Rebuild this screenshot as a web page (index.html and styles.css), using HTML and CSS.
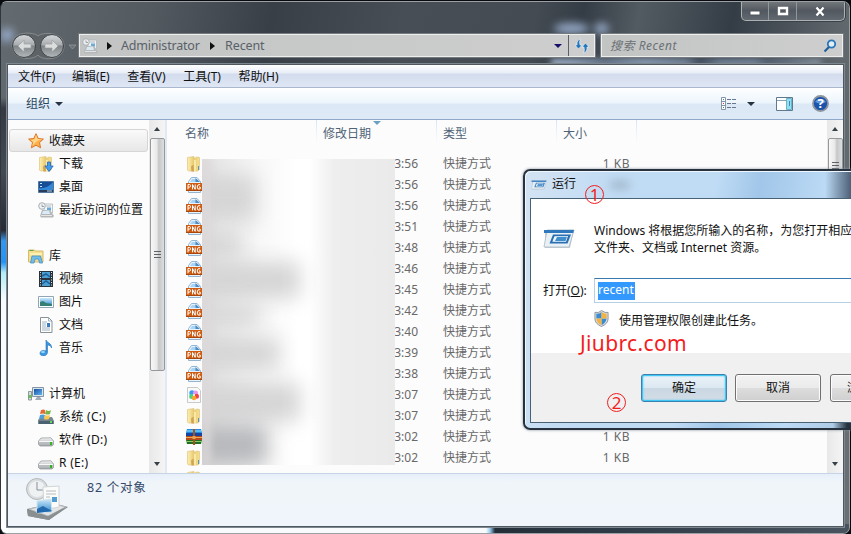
FILE: index.html
```html
<!DOCTYPE html>
<html lang="zh-CN">
<head>
<meta charset="utf-8">
<title>Recent</title>
<link rel="stylesheet" href="styles.css">
</head>
<body>
<svg class="defs" width="0" height="0" aria-hidden="true">
  <defs>
    <linearGradient id="gold" x1="0" x2="1"><stop offset="0" stop-color="#fff0b0"/><stop offset=".5" stop-color="#e8cb76"/><stop offset="1" stop-color="#f6df8c"/></linearGradient>
    <linearGradient id="blue" x1="0" y1="0" x2="1" y2="1"><stop offset="0" stop-color="#174da0"/><stop offset="1" stop-color="#62b4ee"/></linearGradient>
    <linearGradient id="sky" x1="0" y1="0" x2="0" y2="1"><stop offset="0" stop-color="#cdeafc"/><stop offset="1" stop-color="#2c86c8"/></linearGradient>
    <linearGradient id="orb" x1="0" y1="0" x2="0" y2="1"><stop offset="0" stop-color="#d4d8da"/><stop offset=".45" stop-color="#a9adb0"/><stop offset=".5" stop-color="#7e8386"/><stop offset="1" stop-color="#b4b9bb"/></linearGradient>
    <linearGradient id="steel" x1="0" y1="0" x2="0" y2="1"><stop offset="0" stop-color="#f4f4f4"/><stop offset="1" stop-color="#9b9fa2"/></linearGradient>
    <symbol id="folder" viewBox="0 0 16 16"><path d="M1.500 1.500 8 .5v2l3-1.500 2.500.5v12L12 15H2.500l-1-1z" fill="url(#gold)" stroke="#dfc67c" stroke-width=".7"/><path d="M5 10.500 7.500 8.500 8 15.500H5.500z" fill="#d0a458"/><path d="M8 4v11.500l2-1V4z" fill="#fae9a5"/><path d="M12 10h1v4h-1z" fill="#4d96dc"/></symbol>
    <symbol id="png" viewBox="0 0 16 16"><path d="M2.500 4.500 5.500.5H11l3.500 4V15.500h-12z" fill="#e8f4fd" stroke="#94b5d1"/><path d="M6 2h4v3H4z" fill="#a9d3f5"/><path d="M9.500 1v4H14z" fill="#4f8cc2"/><path d="M0 6h16v7.500H0z" fill="#ce5c12"/><path d="M0 13h16v1H0z" fill="#a9460a"/><path d="M2 12.300V7.500h1.500q1 0 1 1.300t-1 1.300H2M6.500 12.300V7.500l2.700 4.800V7.500M14.200 7.600q-3-.6-3 2.400t3 2V10h-1.200" fill="none" stroke="#fff" stroke-width="1" stroke-linejoin="bevel"/></symbol>
    <symbol id="colors" viewBox="0 0 16 16"><path d="M1.500.5h10l3 3v12h-13z" fill="#fafafa" stroke="#c9c9c9"/><circle cx="6" cy="6" r="2.700" fill="#3b9cf4"/><circle cx="9.500" cy="6" r="2.500" fill="#e59bef"/><circle cx="5.700" cy="9.500" r="2.500" fill="#4bd479"/><circle cx="10.500" cy="9.200" r="2.500" fill="#f04545"/><circle cx="8" cy="11" r="2.300" fill="#f4a731"/><circle cx="8" cy="8" r="1" fill="#fff"/></symbol>
    <symbol id="archive" viewBox="0 0 16 16"><path d="M1 0h14l1 4H0z" fill="#248be1"/><path d="M1 1h14v2H1z" fill="#58bdf7"/><path d="M0 4h16v3H0z" fill="#1645a1"/><path d="M0 7h16v4H0z" fill="#b74a1b"/><path d="M0 8h16v1H0z" fill="#efa657"/><path d="M0 11h16l-1 4H1z" fill="#1f6e25"/><path d="M0 12h16v1H0z" fill="#90ca61"/><path d="M7 0h2v16H7z" fill="#a65117"/><path d="M6.500 7h3v3h-3z" fill="#e5a34f"/></symbol>
    <symbol id="star" viewBox="0 0 16 16"><path d="m8 .7 2.200 4.800 5.200.6-3.900 3.500 1.100 5.200L8 12.200l-4.600 2.600 1.100-5.200L.6 6.100l5.200-.6z" fill="#fcb04a" stroke="#df7528"/><path d="m8 2 1.500 4H14L9 8 4 13l1.500-4L3 7l3.500-.5z" fill="#fed68c"/></symbol>
    <symbol id="download" viewBox="0 0 16 16"><use href="#folder" width="16" height="16"/><path d="M9.500 6h3v4h2.700L11 15.500 7 10h2.500z" fill="#429ded" stroke="#2367bb" stroke-width=".8"/></symbol>
    <symbol id="desktop" viewBox="0 0 16 16"><path d="M.5 2.500h15v11H.5z" fill="#174d97" stroke="#53779f"/><path d="M1 9c4 1 10-1 14-6v8H1z" fill="#3487d4"/><path d="M1 11h14v2H1z" fill="#283c59"/><path d="M2 4h2v1H2m0 2h2v1H2" fill="#bfe7ff"/><path d="M9 12h5" stroke="#b6d7ef"/></symbol>
    <symbol id="recent" viewBox="0 0 16 16"><path d="M6 2h8.500v9H6z" fill="#f5f6f7" stroke="#adb4b9" stroke-width=".8"/><path d="M8 4h5m-5 5h5" stroke="#b4bcc1"/><path d="M9 5.500h4v3H9z" fill="#65aada"/><circle cx="4" cy="4" r="3.300" fill="#f2f3f3" stroke="#a6aeb3"/><path d="M4 2.500v2h2" fill="none" stroke="#7c8a93" stroke-width=".8"/><path d="M4 8h8l4 6-1 1.500H3L2 14z" fill="#b4b8ba"/><path d="m5 9 6-.5 1 3.500H4z" fill="#dcecf6"/><path d="M3 13h11v1H3z" fill="#e4e6e7"/></symbol>
    <symbol id="library" viewBox="0 0 16 16"><path d="M.5 2h6l1 1H15v11H.5z" fill="#f5df8e" stroke="#d8bb68"/><path d="M2 5h12v2H2z" fill="#fff0b6"/><path d="M1.500 2.500h4" stroke="#58a85a"/><path d="m2.500 15 1.500-7h8.500l2 7h-3l-1-4H7l-1 4z" fill="#71bce9" stroke="#438fc7" stroke-width=".8"/></symbol>
    <symbol id="video" viewBox="0 0 16 16"><path d="M1 0h14v16H1z" fill="#28333b"/><path d="M4 1h8v6H4zm0 8h8v6H4z" fill="#4c9ed3"/><path d="m4 5 4-2 4 3M4 13l4-3 4 3" stroke="#1c5e94" stroke-width="1.500" fill="none"/><path d="M2.500 1v15M13.500 1v15" stroke="#dfe4e7" stroke-dasharray="1 1.500"/></symbol>
    <symbol id="picture" viewBox="0 0 16 16"><path d="M.5 2.500h15v11H.5z" fill="#fff" stroke="#90a5b5"/><path d="M2 4h12v8H2z" fill="url(#sky)"/><path d="m2 8 3-1 3 2 6 1v2H2z" fill="#347e73"/></symbol>
    <symbol id="document" viewBox="0 0 16 16"><path d="M2.500.5h8L14 4v11.500H2.500z" fill="#fff" stroke="#879397"/><path d="M10.500.5V4H14M4 5h5M4 7h4m-4 2h4m-4 2h8m-8 2h8" fill="none" stroke="#899fb0" stroke-width=".8"/><path d="M9 6h3v4H9z" fill="#367dc0"/></symbol>
    <symbol id="music" viewBox="0 0 16 16"><path d="M8 12V0c1 3 6 3 5.500 8-.5-2-2-3-4-3v7c0 5-8 5-7.500 1 .5-3 4-3 6-2" fill="#3d98e0" stroke="#2470b5" stroke-width=".6"/><ellipse cx="5" cy="12" rx="2" ry="1" fill="#9edaff"/></symbol>
    <symbol id="computer" viewBox="0 0 16 16"><path d="M.5 5.500h3V14h-3z" fill="#d3dadc" stroke="#8b999b"/><path d="M4.500 1.500h11v9h-11z" fill="#d8e5ed" stroke="#8695a3"/><path d="M6 3h8v6H6z" fill="url(#blue)"/><path d="m9 11-2 3h7l-2-3z" fill="#a0abb3"/><path d="M1 9h2v3H1z" fill="#5ccc3d"/></symbol>
    <symbol id="drive" viewBox="0 0 16 16"><path d="m3 6 10-.2L15.500 9v3.500L14 14H2L.5 12.500V9z" fill="url(#steel)" stroke="#999fa2" stroke-width=".8"/><path d="M1 9.500h14v3H1z" fill="#b9bdbf"/><path d="M1 9.500h14" stroke="#f8f8f8"/><path d="M12 10h2v3h-2z" fill="#31b820"/></symbol>
    <symbol id="system" viewBox="0 0 16 16"><path d="m2 9 12-1 2 4v3H0v-4z" fill="#75858e"/><path d="M1 12h14v3H1z" fill="#496171"/><path d="M12 12h2v2h-2z" fill="#5be050"/><path d="M3 1q3-1 4 0v4q-2-1-5 0z" fill="#e66a31"/><path d="M8 1q3 2 5 0l-1 4q-2 1-5 0z" fill="#76b646"/><path d="M2 6q3-1 5 0L6 10q-3-1-5 0z" fill="#4e9ed8"/><path d="M7 6q3 1 5 0l-1 4q-3 1-5 0z" fill="#ffc548"/></symbol>
    <symbol id="run" viewBox="0 0 32 20"><path d="m2 1 29-.2L27 19H2z" fill="#c6d0d7"/><path d="M4 1h27l-5 17H1z" fill="#e9f1f5" stroke="#a9b8c3" stroke-width=".8"/><path d="M1 1h30l-.8 3H1z" fill="#2e78bb"/><path d="m10 5.500 18-.1-3.500 9.100H6.500z" fill="#2b6fb3"/><path d="m11.500 7.200 13.500-.1-2 5.700H9.300z" fill="#eef8fe"/><path d="m14 8 10-.2-1.500 4.200H12z" fill="#3f8ecb"/></symbol>
    <symbol id="shield" viewBox="0 0 16 18"><path d="M8 .5q4 3 7 2v7q0 5-7 8-7-3-7-8v-7q4 1 7-2" fill="#d9dde1" stroke="#87919a"/><path d="M8 2v7H2.500V4Q6 4 8 2m0 7h5.500q-1 5-5.500 7z" fill="#398bd4"/><path d="M8 2q3 2 5.500 2v5H8zm0 7H2.500Q3 14 8 16z" fill="#f4b340"/></symbol>
  </defs>
</svg>
<div class="explorer">
  <div class="glass" aria-hidden="true"><i class="glow left"></i><i class="glow one"></i><i class="glow two"></i><i class="glow strip"></i></div>
  <div class="caption"><span><svg width="12" height="10"><path d="M1 5h10v4H1z" fill="#fff" stroke="#50565c"/></svg></span><span><svg width="12" height="10"><path d="M2 2h8v6H2z" fill="none" stroke="#60666c" stroke-width="4"/><path d="M2 2h8v6H2z" fill="none" stroke="#fff" stroke-width="2.300"/></svg></span><span class="close"><svg width="12" height="11"><path d="m2.500 1.500 7 8m0-8-7 8" stroke="#50565c" stroke-width="4"/><path d="m2.500 1.500 7 8m0-8-7 8" stroke="#fff" stroke-width="2.300"/></svg></span></div>
  <header class="navigation">
    <svg class="arrows" width="67" height="28" viewBox="0 0 67 28"><path d="M2 13C2-2 24 0 28 4c4-4 26-5 26 10S32 29 28 23C22 29 2 28 2 13" fill="#5d6266" stroke="#868b8e"/><circle cx="14" cy="14" r="11.500" fill="url(#orb)" stroke="#3d4348"/><circle cx="42" cy="14" r="11.500" fill="url(#orb)" stroke="#3d4348"/><path d="m14 8-6 6 6 6v-4h7v-4h-7zm28 0 6 6-6 6v-4h-7v-4h7z" fill="#dcdede" stroke="#9ca1a4" stroke-width=".7"/><path d="M59 13h7l-3.500 4z" fill="#6a7076" stroke="#999da0" stroke-width=".7"/></svg>
    <div class="address"><svg class="icon" width="16" height="16"><use href="#recent"/></svg><i class="tri right"></i><span class="admin">Administrator</span><i class="tri right"></i><span class="recent">Recent</span><i class="tri down"></i><div class="refresh"><svg width="16" height="16" viewBox="0 0 16 16"><path d="M6.500 1Q5 3 6 7h2l-3.500 4L1 7h2q-.5-5 3.500-6M9.500 15q1.500-2 .5-6H8l3.500-4L15 9h-2q.5 5-3.500 6" fill="#2677be" stroke="#f1f6fa" stroke-width=".6"/></svg></div></div>
    <div class="search"><i>搜索 Recent</i><svg width="14" height="14" viewBox="0 0 14 14"><circle cx="8.500" cy="5" r="3.700" fill="#e4eef5" stroke="#2877bb" stroke-width="1.800"/><path d="M6 8 1.500 12.500" stroke="#245e99" stroke-width="2.200"/></svg></div>
  </header>
  <main class="client">
    <nav class="menu"><span>文件(F)</span><span>编辑(E)</span><span>查看(V)</span><span>工具(T)</span><span>帮助(H)</span></nav>
    <div class="toolbar"><span>组织</span><i class="tri down"></i>
      <svg class="view" width="16" height="13" viewBox="0 0 16 13"><path d="M.5.5h4v12h-4zM0 4.500h5m-5 4h5" fill="#fff" stroke="#8594a9"/><path d="M6 2.500h9m-9 4h9m-9 4h9" stroke="#68778c" stroke-dasharray="4 1"/><path d="M2 2h1v1H2m0 7h1v1H2" fill="#4e8b56"/><path d="M2 6h1v1H2" fill="#e33"/></svg><i class="tri down v"></i>
      <svg class="pane" width="17" height="14" viewBox="0 0 17 14"><path d="M.5.5h16v13H.5z" fill="#fff" stroke="#607990"/><path d="M1 3.500h10" stroke="#8ba4b4"/><path d="M10.500 1.500h5v11h-5z" fill="#8fe0f1" stroke="#6bb4cb"/><path d="M13 4h1v5h-1z" fill="#4686b8"/></svg>
      <svg class="help" width="17" height="17" viewBox="0 0 17 17"><circle cx="8.500" cy="8.500" r="7.500" fill="#1b52ab" stroke="#8d969f" stroke-width="1.800"/><path d="M3 7a6 5 0 0 1 11 0q-5 3-11 0" fill="#5f95db"/><text x="8.500" y="13" text-anchor="middle">?</text></svg>
    </div>
    <div class="workspace">
      <aside class="tree" id="tree"></aside>
      <div class="scroll leftbar"><i class="tri up"></i><b></b><i class="tri down"></i></div>
      <section class="files">
        <div class="columns"><span>名称</span><span>修改日期<i></i></span><span>类型</span><span>大小</span></div>
        <div class="rows" id="rows"></div>
        <div class="privacy" aria-hidden="true"><i></i><i></i><i></i><i></i><i></i><i></i><i></i><b></b></div>
      </section>
      <div class="scroll rightbar"><i class="tri up"></i><b></b><i class="tri down"></i></div>
    </div>
    <footer class="details"><svg width="44" height="44" viewBox="0 0 44 44"><path d="m2 31 26-6 15 4-19 13-21-4z" fill="#858c8e"/><path d="m4 31 25-5 12 3-18 9z" fill="#e3e5e6" stroke="#b5b8ba"/><circle cx="12" cy="11" r="10.500" fill="#d9dddf" stroke="#b3b8bb"/><circle cx="12" cy="11" r="8" fill="#eff1f2"/><path d="M12 4v8h6" fill="none" stroke="#84909a"/><path d="m18 9 16-1v21l-15 3z" fill="#fbfbfa" stroke="#d2d5d7"/><path d="M21 13h10M21 16h10M21 19h4m-4 3h4" stroke="#b4bcc1"/><path d="M27 19h5v5h-5z" fill="#529cd0"/><path d="m12 23 14-2 1 13-15 1z" fill="url(#sky)" stroke="#d3e5ed"/><path d="m12 31 6-3 9 5-15 2z" fill="#226aad"/><path d="m2 32 20 7 20-11-18 14L3 38z" fill="#8a9092"/></svg><span>82 个对象</span></footer>
  </main>
</div>
<section class="dialog">
  <div class="dialog-title"><svg width="16" height="10"><use href="#run"/></svg><span>运行</span><i class="smudge"></i></div>
  <div class="dialog-client">
    <div class="dialog-main">
      <div class="intro"><svg width="32" height="20"><use href="#run"/></svg><p>Windows 将根据您所输入的名称，为您打开相应<br>文件夹、文档或 Internet 资源。</p></div>
      <div class="open"><label>打开(<u>O</u>):</label><div class="input"><span>recent</span></div></div>
      <div class="admin-task"><svg width="15" height="17"><use href="#shield"/></svg><span>使用管理权限创建此任务。</span></div>
      <div class="watermark">Jiubrc.com</div>
    </div>
    <div class="actions"><button class="primary">确定</button><button>取消</button><button class="browse">浏</button></div>
  </div>
  <span class="mark first">1</span><span class="mark second">2</span>
</section>
<script src="app.js"></script>
</body>
</html>
```
FILE: styles.css
```css
* { box-sizing: border-box; }
body { margin: 0; width: 851px; height: 534px; overflow: hidden; position: relative; background: #080a10; font: 12px/16px "Noto Sans", "Noto Sans CJK SC", sans-serif; color: #111; }
.defs { position: absolute; }
svg { flex: none; }
.explorer { position: relative; width: 850px; height: 533px; margin-top: 1px; border: 1px solid #9ba0a5; border-left-color: #30363d; border-radius: 7px; background: #424951; overflow: hidden; padding: 32px 5px 7px 6px; }
.glass { position: absolute; inset: 0; background:
 linear-gradient(#25272e00 0,#4f565e00 18%,#353a43 20%,#444a53 32%,#282b35 43%,#3397ee 45%,#2493f6 49%,#b3edf5 51%,#f7fbfd 56%,#fff) 0 0/7px 100% no-repeat,
 linear-gradient(90deg,#f8fafb 0 485px,#9bccf0 489px,#232e39 494px,#2c3843 70%,#48535f) 0 100%/100% 9px no-repeat,
 linear-gradient(100deg,#646b70 0,#535a60 16%,#383f47 29%,#474e56 43%,#444b53 57%,#343c45 62%,#535b62 68%,#343c46 78%,#61686d 90%,#6a7074); }
.glow { position: absolute; filter: blur(4px); border-radius: 50%; background: #96a9c7; }
.glow.left { width: 14px; height: 14px; left: -1px; top: 26px; }
.glow.one { width: 35px; height: 11px; left: 553px; top: 21px; }
.glow.two { width: 15px; height: 11px; left: 593px; top: 21px; }
.glow.strip { width: 270px; height: 7px; left: 550px; top: 57px; border-radius: 0; filter: blur(3px); background: linear-gradient(90deg,#a8bad4 8%,#71829a 20%,#93a8c5 35%,#8193ab 50%,#475262 55%,#8193ab 63%,#8193ab 75%,#5c6979 80%,#8f9caa); }
.caption { position: absolute; top: 0; right: 4px; display: flex; width: 104px; height: 19px; border: 1px solid #aeb1b3; border-top: 0; border-radius: 0 0 5px 5px; background: linear-gradient(#70767a,#52585f 48%,#626970); box-shadow: 0 0 0 1px #3a4249; }
.caption span { width: 28px; border-right: 1px solid #92979a; display: flex; align-items: center; justify-content: center; }
.caption .close { width: 48px; border: 0; }
.navigation { position: relative; height: 30px; display: flex; align-items: flex-start; padding-left: 3px; }
.arrows { margin-top: -2px; margin-right: 2px; width: 67px; }
.address, .search { height: 23px; display: flex; align-items: center; border: 1px solid #edeeee; outline: 1px solid #747a7e; background: linear-gradient(90deg,#c2c4c4,#cecece); color: #596168; }
.address { width: 516px; padding-left: 2px; font-size: 12.5px; }
.address .icon { opacity: .9; }
.address > .tri { margin-left: 9px; color: #101010; }
.address .admin { margin-left: 9px; width: 80px; letter-spacing: -.2px; }
.address .recent { margin-left: 10px; letter-spacing: -.1px; }
.address > .tri.down { margin-left: auto; color: #17106b; }
.refresh { height: 21px; width: 26px; border-left: 1px solid #596067; margin-left: 6px; display: flex; align-items: center; justify-content: center; }
.search { width: 242px; margin-left: 6px; padding: 0 5px 0 8px; justify-content: space-between; }
.search i { letter-spacing: .52px; color: #6b7175; }
.tri { display: inline-block; flex: none; width: 0; height: 0; border: 0 solid transparent; }
.tri.right { border-width: 4px 0 4px 5px; border-left-color: currentColor; }
.tri.down { border-width: 4px 4px 0; border-top-color: currentColor; }
.tri.up { border-width: 0 4px 4px; border-bottom-color: currentColor; }
.client { position: relative; height: 463px; display: flex; flex-direction: column; background: #fcfcfd; border: 1px solid #50575f; outline: 1px solid #7d8790; }
.menu { height: 23px; display: flex; align-items: center; padding: 2px 0 0 10px; background: linear-gradient(#fff,#e8edf7 8px,#d3dced 9px,#dfe7f5); border-bottom: 1px solid #aab8cf; }
.menu span { height: 17px; width: 55.300px; letter-spacing: -.05px; }
.menu span:nth-child(1) { width: 54px; }
.menu span:nth-child(3) { width: 56px; }
.toolbar { height: 32px; display: flex; align-items: center; padding-left: 18px; background: linear-gradient(#fff,#ecf5fc 15px,#dce8f5 16px,#dfe9f7); border-bottom: 1px solid #8ea9ca; color: #29455e; }
.toolbar .tri { margin-left: 5px; color: #263442; }
.toolbar .view { margin-left: auto; }
.toolbar .v { margin: 0 21px 0 10px; }
.toolbar .help { margin: 0 14px 0 19px; }
.help text { fill: #fff; font: bold 13px "Noto Sans"; }
.workspace { min-height: 0; height: 353px; flex: none; display: flex; }
.tree { width: 141px; flex: none; padding-top: 9px; overflow: hidden; }
.node { display: flex; align-items: center; height: 23px; padding-left: 30px; gap: 5px; white-space: nowrap; }
.node.root { margin-left: 1px; width: 139px; padding-left: 19px; }
.node.selected { border: 1px solid #d5d5d5; border-radius: 3px; background: linear-gradient(#fafafa,#e7e7e7); padding-left: 18px; }
.node span { padding-top: 1px; }
.node:nth-child(n+13) span { letter-spacing: .3px; }
.scroll { width: 16px; flex: none; background: linear-gradient(90deg,#e8e8e8,#f5f5f5); display: flex; flex-direction: column; align-items: center; color: #364147; padding: 7px 0; }
.scroll > .tri { border-left-width: 3px; border-right-width: 3px; }
.scroll b { width: 15px; height: 233px; margin-top: 7px; border: 1px solid #96999b; border-radius: 2px; background: linear-gradient(#5c6265,#5c6265) 3px 50%/7px 1px no-repeat,linear-gradient(#5c6265,#5c6265) 3px calc(50% + 3px)/7px 1px no-repeat,linear-gradient(#5c6265,#5c6265) 3px calc(50% - 3px)/7px 1px no-repeat,linear-gradient(90deg,#f8f8f8,#e8e8e9 45%,#c5c6c8 60%,#dddede); }
.scroll .down { margin-top: auto; }
.rightbar b { height: 54px; }
.files { width: 662px; border-left: 2px solid #e2e9f5; position: relative; overflow: hidden; }
.columns { display: grid; grid-template-columns: 150px 120px 120px 80px; color: #506376; height: 26px; }
.columns span { border-right: 1px solid; border-image: linear-gradient(#d4e3f5,#eef4fa,#fff) 1; padding: 6px 0 0 6px; position: relative; }
.columns span:first-child { padding-left: 18px; }
.columns i { position: absolute; top: 1px; left: 56px; border: 4px solid transparent; border-top-color: #6a9fc6; border-bottom: 0; }
.rows { padding-top: 7px; }
.file { height: 21px; display: grid; grid-template-columns: 16px 234px 119px 84px; padding-left: 19px; align-items: center; color: #696969; }
.file > :nth-child(2) { text-align: right; padding-right: 18px; }
.file > :nth-child(3) { padding-left: 7px; }
.file > :nth-child(4) { text-align: right; padding-right: 9px; letter-spacing: .5px; }
.privacy { position: absolute; left: 35px; top: 39px; width: 193px; height: 306px; overflow: hidden; background: linear-gradient(90deg,#e0dede 0,#e9e8e8 15px,#f7f7f7 55px,#fff 95px,#fff 108px,#eee 132px,#eaeaeb); }
.privacy i { display: block; filter: blur(10px); height: 29px; width: 61px; margin: 10px 0 14px -7px; background: #d5d5d6; }
.privacy i:nth-child(1) { height: 45px; margin-top: 16px; }
.privacy i:nth-child(2) { width: 45px; height: 22px; }
.privacy i:nth-child(3) { width: 105px; height: 36px; margin-top: -8px; }
.privacy i:nth-child(4) { width: 65px; height: 18px; margin-top: -6px; }
.privacy i:nth-child(5) { width: 84px; height: 31px; margin-top: 10px; }
.privacy i:nth-child(6) { width: 105px; height: 38px; margin-top: 13px; }
.privacy i:nth-child(7) { width: 72px; height: 40px; background: #b8b9bc; margin-top: -10px; }
.privacy b { position: absolute; left: 0; top: 0; width: 8px; height: 100%; background: #ddd9da; filter: blur(4px); }
.details { flex: 1; display: flex; gap: 18px; padding: 4px 0 0 17px; border-top: 1px solid #c7d4e5; background: linear-gradient(#e6effa,#f0f5fa 8px,#f0f5fb); color: #35496a; }
.details span { padding-top: 2px; font-size: 12.500px; letter-spacing: .75px; }
.dialog { position: absolute; left: 523px; top: 169px; width: 328px; height: 261px; border: 2px solid #27323e; border-right: 0; border-radius: 7px 0 0 7px; padding: 0 0 6px 5px; background: linear-gradient(90deg,transparent 300px,#33445bcc) 0 0/100% 28px no-repeat,linear-gradient(90deg,transparent 308px,#26333f 322px) 0 100%/100% 8px no-repeat,linear-gradient(100deg,#d3e3f3,#c0dbf4 25%,#c0dcf5 52%,#a1c6e9 64%,#bcdaf5 82%,#aac7e2); box-shadow: inset 1px 1px 0 #eef7ff, 0 0 3px #85909b; overflow: hidden; }
.dialog-title { height: 27px; display: flex; align-items: center; gap: 5px; padding-left: 1px; }
.dialog-title svg { opacity: .85; }
.dialog-title span { padding-bottom: 1px; }
.smudge { width: 22px; height: 10px; border-radius: 50%; margin-left: 28px; background: #a5bccf; filter: blur(4px); }
.dialog-client { height: 225px; width: 321px; border: 1px solid #496174; border-right: 0; background: #fff; }
.dialog-main { height: 154px; padding: 22px 0 0 12px; }
.intro { display: flex; gap: 19px; height: 57px; }
.intro svg { margin-top: 8px; }
.intro p { margin: 1px -12px 0 0; line-height: 17px; white-space: nowrap; }
.open { display: flex; align-items: center; height: 25px; }
.open label { width: 51px; white-space: nowrap; }
.input { flex: 1; height: 25px; border: 1px solid #b5cfe5; border-top-color: #3979ad; border-right: 0; padding: 3px; }
.input span { display: inline-block; height: 18px; padding-right: 1px; background: #3399ff; color: #fff; }
.admin-task { height: 34px; display: flex; align-items: center; gap: 10px; padding: 2px 0 0 51px; }
.admin-task svg { margin-top: -5px; }
.watermark { height: 18px; margin-top: -10px; padding-left: 37px; color: #f41d1d; font-size: 21px; line-height: 32px; letter-spacing: .35px; }
.actions { height: 69px; background: #f0f0f0; display: flex; gap: 8px; padding: 21px 0 0 110px; overflow: hidden; }
button { width: 86px; height: 28px; padding: 0; flex: none; border: 1px solid #707070; border-radius: 3px; background: linear-gradient(#f2f2f2,#ebebeb 49%,#ddd 50%,#cfcfcf); box-shadow: inset 0 0 0 1px #fcfcfc; color: #111; font: inherit; }
.primary { border-color: #3c7fb1; background: linear-gradient(#edf3f8,#dce8f1 49%,#c9d7e3 50%,#d3dde5); box-shadow: inset 0 0 0 1px #40c8f5, inset 0 0 2px 1px #53caf3; }
.browse { margin-left: 1px; text-align: left; padding-left: 16px; }
.mark { position: absolute; display: flex; align-items: center; justify-content: center; width: 19px; height: 19px; border: 1px solid #f41d1d; border-radius: 50%; color: #f41d1d; font-size: 17px; line-height: 15px; }
.first { left: 60px; top: 14px; }
.second { left: 82px; top: 222px; }
```
FILE: app.js
```js
const nodes = [
  ["star", "收藏夹", 1], ["download", "下载"], ["desktop", "桌面"], ["recent", "最近访问的位置"], null,
  ["library", "库", 1], ["video", "视频"], ["picture", "图片"], ["document", "文档"], ["music", "音乐"], null,
  ["computer", "计算机", 1], ["system", "系统 (C:)"], ["drive", "软件 (D:)"], ["drive", "R (E:)"]
];
const icon = name => `<svg width="16" height="16"><use href="#${name}"/></svg>`;
document.querySelector("#tree").innerHTML = nodes.map((n, i) => n
  ? `<div class="node${n[2] ? " root" : ""}${i ? "" : " selected"}">${icon(n[0])}<span>${n[1]}</span></div>`
  : '<div class="node"></div>').join("");
const times = ["56", "56", "56", "51", "48", "46", "45", "42", "40", "39", "38", "07", "07", "02", "02", ""];
const kinds = ["folder", ...Array(10).fill("png"), "colors", "folder", "archive", "folder", "folder"];
const sized = [0, 13, 14];
document.querySelector("#rows").innerHTML = times.map((t, i) =>
  `<div class="file">${icon(kinds[i])}<span>${t ? "3:" + t : ""}</span><span>${t ? "快捷方式" : ""}</span><span>${sized.includes(i) ? "1 KB" : ""}</span></div>`).join("");
```
